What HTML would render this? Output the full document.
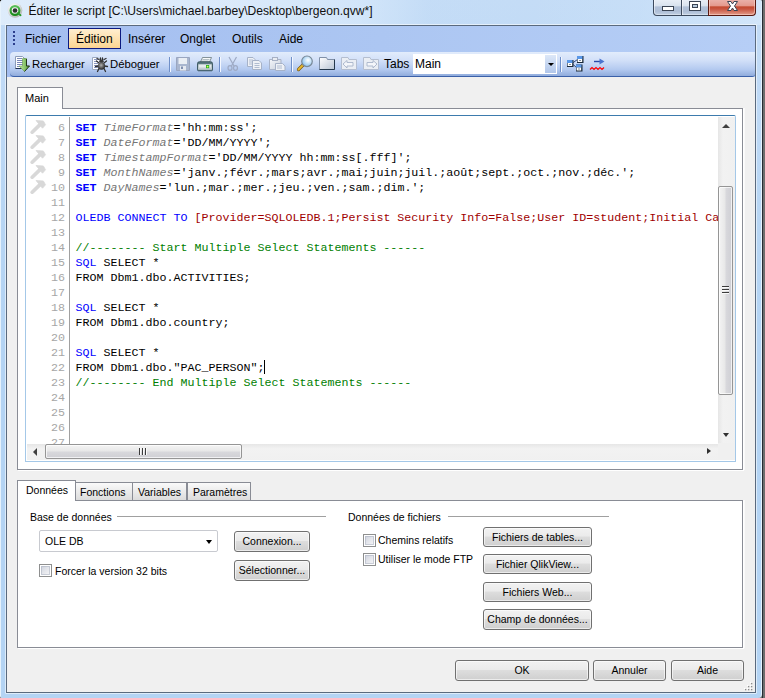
<!DOCTYPE html>
<html><head><meta charset="utf-8">
<style>
html,body{margin:0;padding:0;width:765px;height:698px;overflow:hidden;background:#6e6e6e;}
*{box-sizing:border-box;}
body{position:relative;font-family:"Liberation Sans",sans-serif;}
.a{position:absolute;}
.t12{font-size:12px;color:#000;white-space:nowrap;line-height:15px;}
.t11{font-size:10.5px;color:#000;white-space:nowrap;line-height:13px;}
.code{font-family:"Liberation Mono",monospace;font-size:11.67px;line-height:15px;white-space:pre;}
.kw{color:#0000ff;}
.b{font-weight:bold;}
.var{color:#767676;font-style:italic;}
.str{color:#000;}
.cm{color:#008000;}
.rd{color:#a00000;}
.ln{left:0;width:39px;text-align:right;color:#a6a6a6;}
.btn{position:absolute;border:1px solid #707070;border-radius:3px;background:linear-gradient(#f2f2f2 0%,#ebebeb 45%,#dddddd 50%,#cfcfcf 100%);box-shadow:inset 0 0 0 1px rgba(255,255,255,0.6);font-size:10.5px;text-align:center;white-space:nowrap;color:#000;}
.chk{position:absolute;width:13px;height:13px;border:1px solid #8e8f8f;background:#fff;}
.chk::after{content:"";position:absolute;left:1px;top:1px;width:9px;height:9px;background:linear-gradient(135deg,#cdd1dc 0%,#e2e4ea 45%,#f6f6f8 100%);box-shadow:inset 0 0 0 1px rgba(170,176,192,0.55);}
.sep{position:absolute;width:2px;height:15px;border-left:1px solid #6f8fc8;border-right:1px solid #f4f8ff;}
</style></head><body>

<!-- window frame -->
<div class="a" style="left:0;top:0;width:762px;height:698px;border-radius:3px 2px 4px 2px;background:linear-gradient(180deg,#c4dcf6 0px,#c0daf6 80px,#b8d6f4 200px,#b4d4f4 320px,#b4d4f4 100%);border-left:1px solid #e6f2fc;border-right:1px solid #e6f2fc;"></div>
<div class="a" style="left:1px;top:0;width:761px;height:25px;border-radius:2px 2px 0 0;background:linear-gradient(90deg,rgba(228,240,252,0.8) 0%,rgba(226,238,252,0.75) 30%,rgba(220,236,252,0.6) 47%,rgba(200,224,248,0.1) 56%,rgba(190,218,246,0.0) 70%,rgba(206,228,250,0.3) 84%,rgba(220,236,252,0.6) 100%);"></div>
<div class="a" style="left:762px;top:0;width:3px;height:698px;background:#262c34;"></div>
<div class="a" style="left:763px;top:0;width:2px;height:698px;background:#6e6e6e;"></div>
<div class="a" style="left:0;top:0;width:1px;height:1px;background:#1a1a1a;"></div>

<!-- title -->
<svg class="a" style="left:0;top:0" width="30" height="24">
<defs><radialGradient id="gIc" cx="0.4" cy="0.35" r="0.65"><stop offset="0" stop-color="#ffffff"/><stop offset="0.6" stop-color="#e6e6e6"/><stop offset="1" stop-color="#b8b8b8"/></radialGradient>
<linearGradient id="gGr" x1="0" y1="0" x2="0" y2="1"><stop offset="0" stop-color="#58c058"/><stop offset="1" stop-color="#1a8a1a"/></linearGradient></defs>
<circle cx="15" cy="10.5" r="7.3" fill="url(#gIc)"/>
<circle cx="15" cy="10.5" r="4.4" fill="none" stroke="url(#gGr)" stroke-width="2.2"/>
<path d="M17.8 13.3 L20.6 15.2" stroke="#2a9a2a" stroke-width="1.8" stroke-linecap="round"/>
<circle cx="15" cy="10.5" r="2.3" fill="#303030"/>
</svg>
<div class="a t12" style="left:28.5px;top:4px;color:#101010;font-size:12.1px;">Éditer le script [C:\Users\michael.barbey\Desktop\bergeon.qvw*]</div>

<!-- caption buttons -->
<div class="a" style="left:653px;top:0;width:29px;height:16px;border:1px solid #3c4a5e;border-top:none;border-radius:0 0 0 4px;background:linear-gradient(#e8eef6 0%,#d8e2ee 40%,#b2c2d8 45%,#aebed6 75%,#c0d0e4 100%);box-shadow:inset 1px 0 0 rgba(255,255,255,0.5),inset 0 -1px 0 rgba(255,255,255,0.35);"></div>
<div class="a" style="left:682px;top:0;width:26px;height:16px;border-bottom:1px solid #3c4a5e;background:linear-gradient(#e8eef6 0%,#d8e2ee 40%,#b2c2d8 45%,#aebed6 75%,#c0d0e4 100%);box-shadow:inset 1px 0 0 rgba(255,255,255,0.5),inset 0 -1px 0 rgba(255,255,255,0.35);"></div>
<div class="a" style="left:708px;top:0;width:48px;height:16px;border:1px solid #5a1a12;border-top:none;border-radius:0 0 4px 0;background:linear-gradient(#eab0a8 0%,#e4988c 40%,#c44a30 45%,#c85440 60%,#dc8a78 90%,#e4a090 100%);box-shadow:inset 1px 0 0 rgba(255,220,210,0.6), inset -1px -1px 0 rgba(255,220,210,0.5);"></div>
<svg class="a" style="left:0;top:0" width="765" height="20">
<rect x="662.5" y="6.5" width="11" height="4" fill="#fff" stroke="#3a4454" stroke-width="1"/>
<rect x="689.5" y="1.5" width="11" height="9" fill="#fff" stroke="#3a4454" stroke-width="1"/>
<rect x="692.5" y="4.5" width="5" height="3" fill="#b8cce0" stroke="#3a4454" stroke-width="1"/>
<path d="M727.5 1.5 L731 1.5 L732.5 4 L734 1.5 L737.5 1.5 L734.5 6 L737.5 10.5 L734 10.5 L732.5 8 L731 10.5 L727.5 10.5 L730.5 6 Z" fill="#fff" stroke="#3a4454" stroke-width="1" stroke-linejoin="round"/>
</svg>

<!-- client area -->
<div class="a" style="left:6px;top:25px;width:750px;height:668px;border:1px solid #5a6a7e;background:#f0f0f0;"></div>
<div class="a" style="left:5px;top:24px;width:752px;height:670px;border:1px solid rgba(255,255,255,0.55);border-radius:1px;"></div>

<!-- menubar -->
<div class="a" style="left:7px;top:26px;width:748px;height:51px;background:linear-gradient(90deg,#a4bef0 0%,#acc6f2 50%,#b6cef6 100%);"></div>
<div class="a" style="left:13px;top:31px;width:2px;height:15px;background:repeating-linear-gradient(#2c3e8c 0 2px,transparent 2px 4px);"></div>
<div class="a t12" style="left:25px;top:32px;">Fichier</div>
<div class="a" style="left:68px;top:28px;width:53px;height:21px;border:1px solid #0c1a80;background:linear-gradient(#ffeed0,#fcd898 90%,#fbd290);"></div>
<div class="a t12" style="left:76px;top:32px;">Édition</div>
<div class="a t12" style="left:128px;top:32px;">Insérer</div>
<div class="a t12" style="left:180px;top:32px;">Onglet</div>
<div class="a t12" style="left:232px;top:32px;">Outils</div>
<div class="a t12" style="left:279px;top:32px;">Aide</div>

<!-- toolbar -->
<div class="a" style="left:10px;top:52px;width:745px;height:25px;border-radius:4px 0 3px 4px;background:linear-gradient(#e2ecfc 0%,#d2e0f8 35%,#b4caf0 72%,#90acdc 100%);border-bottom:1px solid #3a60a8;"></div>
<div class="a t12" style="left:32px;top:57px;font-size:11.3px;">Recharger</div>
<div class="a t12" style="left:110px;top:57px;font-size:11.3px;">Déboguer</div>
<div class="sep" style="left:169px;top:57px;"></div>
<div class="sep" style="left:219px;top:57px;"></div>
<div class="sep" style="left:291px;top:57px;"></div>
<div class="a t12" style="left:384px;top:57px;">Tabs</div>
<div class="a" style="left:413px;top:54px;width:144px;height:20px;background:#fff;"></div>
<div class="a" style="left:545px;top:55px;width:11px;height:18px;background:linear-gradient(#dde8f8,#b0c6ea);"></div>
<div class="a t12" style="left:415px;top:57px;">Main</div>
<div class="a" style="left:548px;top:63px;width:0;height:0;border-left:3px solid transparent;border-right:3px solid transparent;border-top:3px solid #000;"></div>
<div class="sep" style="left:560px;top:57px;"></div>

<svg class="a" style="left:0;top:0" width="765" height="80">
<defs>
<linearGradient id="gArrow" x1="0" y1="0" x2="1" y2="0"><stop offset="0" stop-color="#c4f0a8"/><stop offset="1" stop-color="#58a038"/></linearGradient>
<linearGradient id="gDis" x1="0" y1="0" x2="1" y2="1"><stop offset="0" stop-color="#f4f6fa"/><stop offset="1" stop-color="#c8d0dc"/></linearGradient>
<linearGradient id="gFold" x1="0" y1="0" x2="1" y2="1"><stop offset="0" stop-color="#ffffff"/><stop offset="1" stop-color="#b8c4d4"/></linearGradient>
<radialGradient id="gBug" cx="0.45" cy="0.4" r="0.6"><stop offset="0" stop-color="#b0b0b0"/><stop offset="1" stop-color="#1e1e1e"/></radialGradient>
<radialGradient id="gLens" cx="0.6" cy="0.4" r="0.6"><stop offset="0" stop-color="#ffffff"/><stop offset="1" stop-color="#8cc4f0"/></radialGradient>
</defs>
<!-- Recharger doc -->
<path d="M15.5 56.5 H22.5 L25 59 V68.5 H15.5 Z" fill="#fff" stroke="#8c9cb8" stroke-width="1"/>
<path d="M15.5 68.5 H25" stroke="#1e3050" stroke-width="1"/>
<path d="M17 58.5 H22 M17 60.5 H23 M17 62.5 H23 M17 64.5 H23 M17 66.5 H22" stroke="#7a88b8" stroke-width="1"/>
<path d="M22.5 58.5 H26.5 V66 H29.5 L24.5 71.5 L19 66 H22.5 Z" fill="url(#gArrow)" stroke="#6a9a50" stroke-width="0.6"/>
<path d="M26.5 59 V66 H29.5 L24.5 71.5" fill="none" stroke="#1a2a14" stroke-width="0.9"/>
<!-- Deboguer doc + bug -->
<path d="M92.5 57.5 H98 L100 59.5 V69.5 H92.5 Z" fill="#fff" stroke="#9aa8c0" stroke-width="1"/>
<path d="M94 59.5 H98 M94 61.5 H98 M94 63.5 H98 M94 65.5 H98 M94 67.5 H98" stroke="#8a98c0" stroke-width="1"/>
<g stroke="#303030" stroke-width="1.3" fill="none" stroke-linecap="round">
<path d="M99 59.5 L97 58.5 M104 59.5 L106 58.5"/>
<path d="M99 63 L96.5 61 M104 63 L106.5 61"/>
<path d="M98.5 66 L95.5 66.5 M104.5 66 L107.5 66.5"/>
<path d="M99 68.5 L97.5 71.5 M104 68.5 L105.5 71.5"/>
<path d="M100.5 58 L100.5 60 M102.5 58 L102.5 60"/>
</g>
<ellipse cx="101.5" cy="61.2" rx="2.2" ry="1.8" fill="#3a3a3a"/>
<ellipse cx="101.5" cy="66" rx="3.6" ry="3.8" fill="url(#gBug)"/>
<!-- floppy (disabled) -->
<path d="M176.5 57.5 H189.5 V70.5 H176.5 Z" fill="#a9b6cf" stroke="#9aa6c0" stroke-width="1"/>
<rect x="178.5" y="58" width="8.5" height="6" fill="#eaeef4"/>
<rect x="180" y="66" width="6" height="4.5" fill="#e4e8f0"/>
<rect x="181" y="66.5" width="2" height="2.5" fill="#8090b0"/>
<!-- printer -->
<path d="M200.5 62 L202.5 57.5 H211.5 L209.5 62 Z" fill="#f8fafa" stroke="#6a7a80" stroke-width="0.8"/>
<path d="M202.5 59.5 H209.5 M202 61 H208.5" stroke="#98a8b0" stroke-width="0.7"/>
<path d="M197.5 63.5 Q197.5 61.8 199.2 61.8 H210.8 Q212.5 61.8 212.5 63.5 V69.8 Q212.5 70.8 211.5 70.8 H198.5 Q197.5 70.8 197.5 69.8 Z" fill="#5a7880" stroke="#2e4a50" stroke-width="0.8"/>
<rect x="198.3" y="64.3" width="13.4" height="5.2" fill="#e4eaec"/>
<rect x="198.3" y="67.5" width="13.4" height="2" fill="#c4ced2"/>
<rect x="206" y="65" width="3.2" height="3.2" fill="#28b028"/>
<circle cx="207.6" cy="66.6" r="0.9" fill="#e0ff50"/>
<!-- scissors disabled -->
<g fill="none" stroke="#9eaac4" stroke-width="1.2">
<path d="M229 57 L234 66 M236.5 57 L231.5 66"/>
<ellipse cx="230" cy="68" rx="2" ry="2.3"/>
<ellipse cx="235.5" cy="68" rx="2" ry="2.3"/>
</g>
<!-- copy disabled -->
<path d="M247.5 57.5 H253 L255 59.5 V66.5 H247.5 Z" fill="#eef1f6" stroke="#a6b2c8" stroke-width="1"/>
<path d="M249 60 H253 M249 62 H253 M249 64 H253" stroke="#b0bcd0" stroke-width="1"/>
<path d="M252.5 60.5 H259 L261.5 63 V69.5 H252.5 Z" fill="#eef1f6" stroke="#a6b2c8" stroke-width="1"/>
<path d="M254.5 63.5 H259.5 M254.5 65.5 H259.5 M254.5 67.5 H259.5" stroke="#b0bcd0" stroke-width="1"/>
<!-- paste disabled -->
<path d="M269.5 59.5 H281 V69.5 H269.5 Z" fill="url(#gDis)" stroke="#aab4c8" stroke-width="1"/>
<rect x="272.5" y="57.5" width="5" height="3" fill="#e8ecf2" stroke="#a6b0c4" stroke-width="1"/>
<path d="M275.5 63.5 H282.5 L285 66 V70.5 H275.5 Z" fill="#eef1f6" stroke="#a6b2c8" stroke-width="1"/>
<path d="M277 66 H282 M277 68 H282" stroke="#b0bcd0" stroke-width="1"/>
<!-- magnifier -->
<path d="M303.5 64.5 L298.5 69.5" stroke="#7a5a10" stroke-width="3.2" stroke-linecap="round"/>
<path d="M303.5 64.5 L298.5 69.5" stroke="#e8b830" stroke-width="1.8" stroke-linecap="round"/>
<circle cx="307" cy="61.3" r="5.3" fill="url(#gLens)" stroke="#7a8a98" stroke-width="1.2"/>
<!-- folder -->
<path d="M319.5 57.5 H326.5 L327.5 59.5 H334.5 V69.5 H319.5 Z" fill="url(#gFold)" stroke="#8090a8" stroke-width="1"/>
<path d="M334.5 59.5 V69.5 H319.5" fill="none" stroke="#24384c" stroke-width="1"/>
<!-- folder left disabled -->
<path d="M341.5 57.5 H348 L349 59.5 H356.5 V69.5 H341.5 Z" fill="#eaeef4" stroke="#b4bed0" stroke-width="1"/>
<path d="M343 64 L347 60.5 V62.5 H353 V66 H347 V68 Z" fill="#f4f6fa" stroke="#a8b4ca" stroke-width="0.9"/>
<!-- folder right disabled -->
<path d="M363.5 57.5 H370 L371 59.5 H378.5 V69.5 H363.5 Z" fill="#eaeef4" stroke="#b4bed0" stroke-width="1"/>
<path d="M377 64 L373 60.5 V62.5 H367 V66 H373 V68 Z" fill="#f4f6fa" stroke="#a8b4ca" stroke-width="0.9"/>
<!-- table diagram -->
<path d="M572.5 63 L577.5 59.5 M572.5 64 L576.5 67.5" stroke="#304878" stroke-width="1"/>
<g>
<rect x="567" y="60" width="6.5" height="7" fill="#1a2838"/>
<rect x="567" y="60" width="5.5" height="3" fill="#5a98e8"/>
<rect x="567.6" y="63" width="4.6" height="3" fill="#fff"/>
<rect x="569" y="64" width="2" height="1" fill="#8090a0"/>
<rect x="577" y="56" width="6.5" height="7" fill="#1a2838"/>
<rect x="577" y="56" width="5.5" height="3" fill="#5a98e8"/>
<rect x="577.6" y="59" width="4.6" height="3" fill="#fff"/>
<rect x="579" y="60" width="2" height="1" fill="#8090a0"/>
<rect x="576" y="64.5" width="6.5" height="7" fill="#1a2838"/>
<rect x="576" y="64.5" width="5.5" height="3" fill="#5a98e8"/>
<rect x="576.6" y="67.5" width="4.6" height="3" fill="#fff"/>
<rect x="578" y="68.5" width="2" height="1" fill="#8090a0"/>
</g>
<!-- arrow + zigzag -->
<path d="M594 61.5 H602.5" stroke="#2a4aa8" stroke-width="1.4"/>
<path d="M599.5 58.5 L604.5 61.5 L599.5 64.5 Z" fill="#4a74d0"/>
<path d="M590 69.5 L592 67.5 L594 69.5 L596 67.5 L598 69.5 L600 67.5 L602 69.5 L604 67.5" fill="none" stroke="#ff0000" stroke-width="1.2"/>
</svg>

<!-- upper tab control -->
<div class="a" style="left:17px;top:108px;width:726px;height:362px;border:1px solid #898c95;background:#fff;box-shadow:1px 1px 0 #fff,2px 0 0 #fafafa;"></div>
<div class="a" style="left:17px;top:87px;width:46px;height:22px;border:1px solid #898c95;border-bottom:none;background:#fff;"></div>
<div class="a t11" style="left:25px;top:92px;font-size:11px;">Main</div>

<!-- editor -->
<div id="ed" class="a" style="left:25px;top:115px;width:711px;height:347px;border:1px solid #a4c8e8;border-top-color:#3d7bad;border-radius:2px 2px 0 0;background:#fff;overflow:hidden;">
<div class="a" style="left:0;top:0;width:692px;height:328px;overflow:hidden;">
<svg class="a" style="left:4px;top:4px" width="17" height="15" viewBox="0 0 17 15"><path d="M2.2 12.2 L10 4.6" stroke="#d8d8d8" stroke-width="3.6" stroke-linecap="round"/><path d="M6 0.5 L13.4 1 L15.5 4.8 L12.5 8.2 Z" fill="#d8d8d8" stroke="#d8d8d8" stroke-width="0.8" stroke-linejoin="round"/></svg>
<svg class="a" style="left:4px;top:19px" width="17" height="15" viewBox="0 0 17 15"><path d="M2.2 12.2 L10 4.6" stroke="#d8d8d8" stroke-width="3.6" stroke-linecap="round"/><path d="M6 0.5 L13.4 1 L15.5 4.8 L12.5 8.2 Z" fill="#d8d8d8" stroke="#d8d8d8" stroke-width="0.8" stroke-linejoin="round"/></svg>
<svg class="a" style="left:4px;top:34px" width="17" height="15" viewBox="0 0 17 15"><path d="M2.2 12.2 L10 4.6" stroke="#d8d8d8" stroke-width="3.6" stroke-linecap="round"/><path d="M6 0.5 L13.4 1 L15.5 4.8 L12.5 8.2 Z" fill="#d8d8d8" stroke="#d8d8d8" stroke-width="0.8" stroke-linejoin="round"/></svg>
<svg class="a" style="left:4px;top:49px" width="17" height="15" viewBox="0 0 17 15"><path d="M2.2 12.2 L10 4.6" stroke="#d8d8d8" stroke-width="3.6" stroke-linecap="round"/><path d="M6 0.5 L13.4 1 L15.5 4.8 L12.5 8.2 Z" fill="#d8d8d8" stroke="#d8d8d8" stroke-width="0.8" stroke-linejoin="round"/></svg>
<svg class="a" style="left:4px;top:64px" width="17" height="15" viewBox="0 0 17 15"><path d="M2.2 12.2 L10 4.6" stroke="#d8d8d8" stroke-width="3.6" stroke-linecap="round"/><path d="M6 0.5 L13.4 1 L15.5 4.8 L12.5 8.2 Z" fill="#d8d8d8" stroke="#d8d8d8" stroke-width="0.8" stroke-linejoin="round"/></svg>

<div class="a" style="left:43px;top:1px;width:1px;height:327px;background:#a0a0a0;"></div>
<div class="a code ln" style="top:5px;">6</div>
<div class="a code ln" style="top:20px;">7</div>
<div class="a code ln" style="top:35px;">8</div>
<div class="a code ln" style="top:50px;">9</div>
<div class="a code ln" style="top:65px;">10</div>
<div class="a code ln" style="top:80px;">11</div>
<div class="a code ln" style="top:95px;">12</div>
<div class="a code ln" style="top:110px;">13</div>
<div class="a code ln" style="top:125px;">14</div>
<div class="a code ln" style="top:140px;">15</div>
<div class="a code ln" style="top:155px;">16</div>
<div class="a code ln" style="top:170px;">17</div>
<div class="a code ln" style="top:185px;">18</div>
<div class="a code ln" style="top:200px;">19</div>
<div class="a code ln" style="top:215px;">20</div>
<div class="a code ln" style="top:230px;">21</div>
<div class="a code ln" style="top:245px;">22</div>
<div class="a code ln" style="top:260px;">23</div>
<div class="a code ln" style="top:275px;">24</div>
<div class="a code ln" style="top:290px;">25</div>
<div class="a code ln" style="top:305px;">26</div>
<div class="a code ln" style="top:320px;">27</div>
<div class="a code" style="left:49.6px;top:5px;"><span class="kw b">SET</span> <span class="var">TimeFormat</span>='hh:mm:ss';</div>
<div class="a code" style="left:49.6px;top:20px;"><span class="kw b">SET</span> <span class="var">DateFormat</span>='DD/MM/YYYY';</div>
<div class="a code" style="left:49.6px;top:35px;"><span class="kw b">SET</span> <span class="var">TimestampFormat</span>='DD/MM/YYYY hh:mm:ss[.fff]';</div>
<div class="a code" style="left:49.6px;top:50px;"><span class="kw b">SET</span> <span class="var">MonthNames</span>='janv.;févr.;mars;avr.;mai;juin;juil.;août;sept.;oct.;nov.;déc.';</div>
<div class="a code" style="left:49.6px;top:65px;"><span class="kw b">SET</span> <span class="var">DayNames</span>='lun.;mar.;mer.;jeu.;ven.;sam.;dim.';</div>
<div class="a code" style="left:49.6px;top:95px;"><span class="kw">OLEDB CONNECT TO</span> <span class="rd">[Provider=SQLOLEDB.1;Persist Security Info=False;User ID=student;Initial Catalog=Dbm1]</span></div>
<div class="a code" style="left:49.6px;top:125px;"><span class="cm">//-------- Start Multiple Select Statements ------</span></div>
<div class="a code" style="left:49.6px;top:140px;"><span class="kw">SQL</span> SELECT *</div>
<div class="a code" style="left:49.6px;top:155px;">FROM Dbm1.dbo.ACTIVITIES;</div>
<div class="a code" style="left:49.6px;top:185px;"><span class="kw">SQL</span> SELECT *</div>
<div class="a code" style="left:49.6px;top:200px;">FROM Dbm1.dbo.country;</div>
<div class="a code" style="left:49.6px;top:230px;"><span class="kw">SQL</span> SELECT *</div>
<div class="a code" style="left:49.6px;top:245px;">FROM Dbm1.dbo."PAC_PERSON";</div>
<div class="a code" style="left:49.6px;top:260px;"><span class="cm">//-------- End Multiple Select Statements ------</span></div>
<div class="a" style="left:238px;top:244px;width:1px;height:14px;background:#000;"></div>
</div>
<!-- vscroll -->
<div class="a" style="left:692px;top:1px;width:17px;height:326px;background:linear-gradient(90deg,#e6e6e6,#f2f2f2 30%,#f0f0f0);"></div>
<div class="a" style="left:696px;top:8px;width:0;height:0;border-left:4px solid transparent;border-right:4px solid transparent;border-bottom:4px solid #404040;"></div>
<div class="a" style="left:697px;top:317px;width:0;height:0;border-left:3.5px solid transparent;border-right:3.5px solid transparent;border-top:4px solid #303030;"></div>
<div class="a" style="left:692px;top:70px;width:15px;height:209px;border:1px solid #959595;border-radius:2px;background:linear-gradient(90deg,#f4f4f4 0%,#e8e8e8 45%,#d8d8dc 55%,#cfcfd4 100%);box-shadow:inset 0 0 0 1px rgba(255,255,255,0.7);"></div>
<div class="a" style="left:696px;top:170px;width:7px;height:8px;background:repeating-linear-gradient(#3c3c3c 0 1px,#fafafa 1px 2px,transparent 2px 3px);"></div>
<!-- hscroll -->
<div class="a" style="left:1px;top:328px;width:691px;height:16px;background:linear-gradient(#e6e6e6,#f2f2f2 30%,#f0f0f0);"></div>
<div class="a" style="left:692px;top:327px;width:17px;height:17px;background:#f0f0f0;"></div>
<div class="a" style="left:7px;top:332px;width:0;height:0;border-top:4px solid transparent;border-bottom:4px solid transparent;border-right:4px solid #404040;"></div>
<div class="a" style="left:681px;top:332px;width:0;height:0;border-top:3.5px solid transparent;border-bottom:3.5px solid transparent;border-left:4px solid #303030;"></div>
<div class="a" style="left:19px;top:328px;width:197px;height:15px;border:1px solid #959595;border-radius:2px;background:linear-gradient(#f4f4f4 0%,#e8e8e8 45%,#d8d8dc 55%,#cfcfd4 100%);box-shadow:inset 0 0 0 1px rgba(255,255,255,0.7);"></div>
<div class="a" style="left:113px;top:332px;width:8px;height:7px;background:repeating-linear-gradient(90deg,#3c3c3c 0 1px,#fafafa 1px 2px,transparent 2px 3px);"></div>
</div>

<!-- lower tabs -->
<div class="a" style="left:17px;top:500px;width:726px;height:148px;border:1px solid #898c95;background:#fff;box-shadow:1px 1px 0 #fff,2px 0 0 #fafafa;"></div>
<div class="a" style="left:75px;top:482px;width:58px;height:19px;border:1px solid #898c95;background:linear-gradient(#fafafa,#dcdcdc);"></div>
<div class="a t11" style="left:80px;top:486px;">Fonctions</div>
<div class="a" style="left:132px;top:482px;width:55px;height:19px;border:1px solid #898c95;background:linear-gradient(#fafafa,#dcdcdc);"></div>
<div class="a t11" style="left:138px;top:486px;">Variables</div>
<div class="a" style="left:187px;top:482px;width:64px;height:19px;border:1px solid #898c95;background:linear-gradient(#fafafa,#dcdcdc);"></div>
<div class="a t11" style="left:193px;top:486px;">Paramètres</div>
<div class="a" style="left:17px;top:480px;width:59px;height:21px;border:1px solid #898c95;border-bottom:none;background:#fff;"></div>
<div class="a t11" style="left:26px;top:484px;">Données</div>

<div class="a t11" style="left:30px;top:511px;">Base de données</div>
<div class="a" style="left:117px;top:516px;width:209px;height:1px;background:#a0a0a0;"></div>
<div class="a" style="left:39px;top:530px;width:179px;height:22px;border:1px solid #c8cad0;border-radius:2px;background:#fff;"></div>
<div class="a t11" style="left:45px;top:535px;">OLE DB</div>
<div class="a" style="left:206px;top:540px;width:0;height:0;border-left:3.5px solid transparent;border-right:3.5px solid transparent;border-top:4px solid #000;"></div>
<div class="btn" style="left:234px;top:531px;width:76px;height:21px;line-height:19px;">Connexion...</div>
<div class="btn" style="left:234px;top:560px;width:76px;height:21px;line-height:19px;">Sélectionner...</div>
<div class="chk" style="left:39px;top:564px;"></div>
<div class="a t11" style="left:55px;top:565px;">Forcer la version 32 bits</div>

<div class="a t11" style="left:348px;top:511px;">Données de fichiers</div>
<div class="a" style="left:448px;top:516px;width:161px;height:1px;background:#a0a0a0;"></div>
<div class="chk" style="left:363px;top:534px;"></div>
<div class="a t11" style="left:378px;top:534px;">Chemins relatifs</div>
<div class="chk" style="left:363px;top:553px;"></div>
<div class="a t11" style="left:378px;top:553px;">Utiliser le mode FTP</div>
<div class="btn" style="left:483px;top:527px;width:109px;height:20px;line-height:18px;">Fichiers de tables...</div>
<div class="btn" style="left:483px;top:554px;width:109px;height:20px;line-height:18px;">Fichier QlikView...</div>
<div class="btn" style="left:483px;top:582px;width:109px;height:20px;line-height:18px;">Fichiers Web...</div>
<div class="btn" style="left:483px;top:609px;width:109px;height:21px;line-height:19px;">Champ de données...</div>

<!-- bottom buttons -->
<div class="btn" style="left:455px;top:660px;width:134px;height:21px;line-height:19px;">OK</div>
<div class="btn" style="left:593px;top:660px;width:73px;height:21px;line-height:19px;">Annuler</div>
<div class="btn" style="left:671px;top:660px;width:73px;height:21px;line-height:19px;">Aide</div>

<svg class="a" style="left:740px;top:678px" width="14" height="14">
<g fill="#ffffff"><rect x="4" y="10" width="1" height="1"/><rect x="7" y="10" width="1" height="1"/><rect x="10" y="10" width="1" height="1"/><rect x="7" y="7" width="1" height="1"/><rect x="10" y="7" width="1" height="1"/><rect x="10" y="4" width="1" height="1"/></g>
<g fill="#8c8c8c"><rect x="5" y="11" width="1.3" height="1.3"/><rect x="8" y="11" width="1.3" height="1.3"/><rect x="11" y="11" width="1.3" height="1.3"/><rect x="8" y="8" width="1.3" height="1.3"/><rect x="11" y="8" width="1.3" height="1.3"/><rect x="11" y="5" width="1.3" height="1.3"/></g>
</svg>
</body></html>
